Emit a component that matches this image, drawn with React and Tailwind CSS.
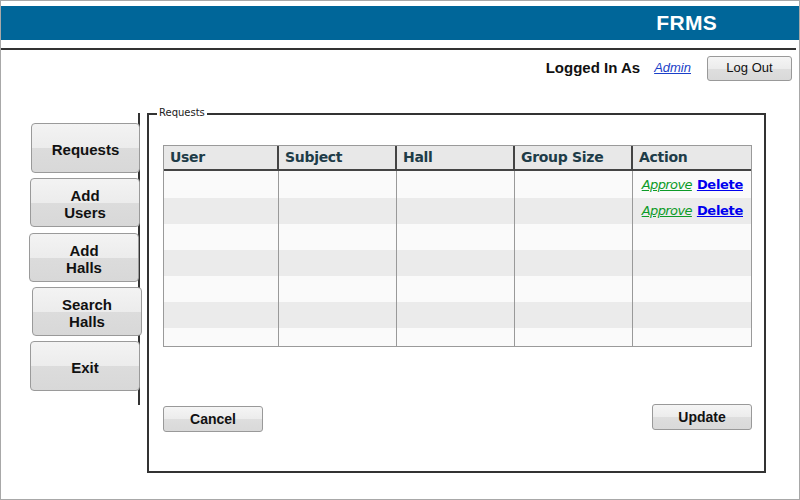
const btn =
  'border border-[#9a9a9a] rounded-[4px] bg-[linear-gradient(#f3f3f3_0%,#ececec_50%,#dcdcdc_50%,#d8d8d8_100%)] text-[#111] font-bold leading-[17px] flex items-center justify-center text-center'

const sideItems = [
  { label: ['Requests'], cls: 'ml-[30px] w-[109px] h-[50px]', mt: 'mt-[10px]' },
  { label: ['Add', 'Users'], cls: 'ml-[29px] w-[110px] h-[49px]', mt: 'mt-[5px]' },
  { label: ['Add', 'Halls'], cls: 'ml-[28px] w-[110px] h-[49px]', mt: 'mt-[6px]' },
  { label: ['Search', 'Halls'], cls: 'ml-[31px] w-[110px] h-[49px]', mt: 'mt-[5px]' },
  { label: ['Exit'], cls: 'ml-[29px] w-[110px] h-[50px]', mt: 'mt-[5px]' },
]

const cols = [
  { name: 'User', w: 'w-[113px]' },
  { name: 'Subject', w: 'w-[118px]' },
  { name: 'Hall', w: 'w-[118px]' },
  { name: 'Group Size', w: 'w-[118px]' },
  { name: 'Action', w: 'flex-1' },
]

const rows = [
  { h: 'h-[27px]', bg: 'bg-[#fafafa]', action: true },
  { h: 'h-[26px]', bg: 'bg-[#ebebeb]', action: true },
  { h: 'h-[26px]', bg: 'bg-[#fafafa]' },
  { h: 'h-[26px]', bg: 'bg-[#ebebeb]' },
  { h: 'h-[26px]', bg: 'bg-[#fafafa]' },
  { h: 'h-[26px]', bg: 'bg-[#ebebeb]' },
  { h: 'h-[26px]', bg: 'bg-[#fafafa]' },
]

const grad = 'bg-[linear-gradient(#f5f5f5_0%,#ececec_50%,#dedede_50%,#d9d9d9_100%)]'

export default function App() {
  return (
    <div className="w-[800px] h-[500px] bg-white border border-[#a8a8a8] overflow-hidden font-['Liberation_Sans',Arial,sans-serif]">
      {/* header */}
      <div className="mt-[5px] h-[34px] bg-[#006699] flex items-center justify-end pr-[82px]">
        <span className="text-white font-bold text-[21px] tracking-[0.3px]">FRMS</span>
      </div>
      <div className="mt-[8px] mr-[3px] border-t-2 border-[#333]" />

      {/* login bar */}
      <div className="flex items-center justify-end pr-[7px] mt-[5px] h-[26px]">
        <span className="font-bold text-[15px] text-[#111]">Logged In As</span>
        <a className="ml-[14px] mr-[16px] text-[13px] italic text-[#1a3fc8] underline">Admin</a>
        <button className={`w-[85px] h-[25px] border border-[#999] rounded-[3px] ${grad} text-[13px] text-[#111]`}>
          Log Out
        </button>
      </div>

      {/* main */}
      <div className="flex mt-[32px]">
        {/* sidebar */}
        <div className="w-[139px] h-[292px] border-r-2 border-[#333] shrink-0">
          {sideItems.map((s, i) => (
            <div key={i} className={`${s.mt} ${s.cls} ${btn} text-[15px] relative`}>
              <div className="pt-[3px]">
                {s.label.map((l, j) => (
                  <div key={j}>{l}</div>
                ))}
              </div>
            </div>
          ))}
        </div>

        {/* fieldset */}
        <div className="ml-[7px] w-[619px] h-[360px] border-2 border-[#333] relative pl-[14px] pr-[12px] pt-[30px]">
          <span className="absolute -top-[8px] left-[8px] bg-white px-[2px] text-[10px] text-[#222] font-['DejaVu_Sans',sans-serif] leading-[12px]">
            Requests
          </span>

          <div className="w-[589px] border border-[#9a9a9a]">
            <div className="flex h-[25px] bg-[#e8e8e8] border-b-2 border-[#444]">
              {cols.map((c, i) => (
                <div
                  key={c.name}
                  className={`${c.w} ${i > 0 ? 'border-l-2 border-[#444]' : ''} flex items-center pl-[6px] text-[14px] font-bold text-[#1e3c48] font-['DejaVu_Sans',sans-serif] tracking-[-0.3px]`}
                >
                  {c.name}
                </div>
              ))}
            </div>
            <div className="h-[175px] overflow-hidden">
              {rows.map((r, ri) => (
                <div key={ri} className={`flex ${r.h} ${r.bg}`}>
                  {cols.map((c, i) => (
                    <div
                      key={c.name}
                      className={`${c.w} ${i > 0 ? 'border-l border-[#999]' : ''} ${i === 1 ? 'ml-[1px]' : ''} flex items-center justify-end pr-[8px]`}
                    >
                      {i === 4 && r.action && (
                        <span className="text-[13px] flex gap-[5px]">
                          <a className="italic underline text-[#0d9b28] font-['DejaVu_Sans',sans-serif] tracking-[-0.6px]">Approve</a>
                          <a className="underline font-bold text-[#0000ee] font-['DejaVu_Sans',sans-serif] tracking-[-0.3px]">Delete</a>
                        </span>
                      )}
                    </div>
                  ))}
                </div>
              ))}
            </div>
          </div>

          <div className="flex justify-between items-start mt-[57px]">
            <button className={`w-[100px] h-[26px] mt-[2px] border border-[#999] rounded-[3px] ${grad} text-[14px] font-bold text-[#111]`}>
              Cancel
            </button>
            <button className={`w-[100px] h-[26px] border border-[#999] rounded-[3px] ${grad} text-[14px] font-bold text-[#111]`}>
              Update
            </button>
          </div>
        </div>
      </div>
    </div>
  )
}
